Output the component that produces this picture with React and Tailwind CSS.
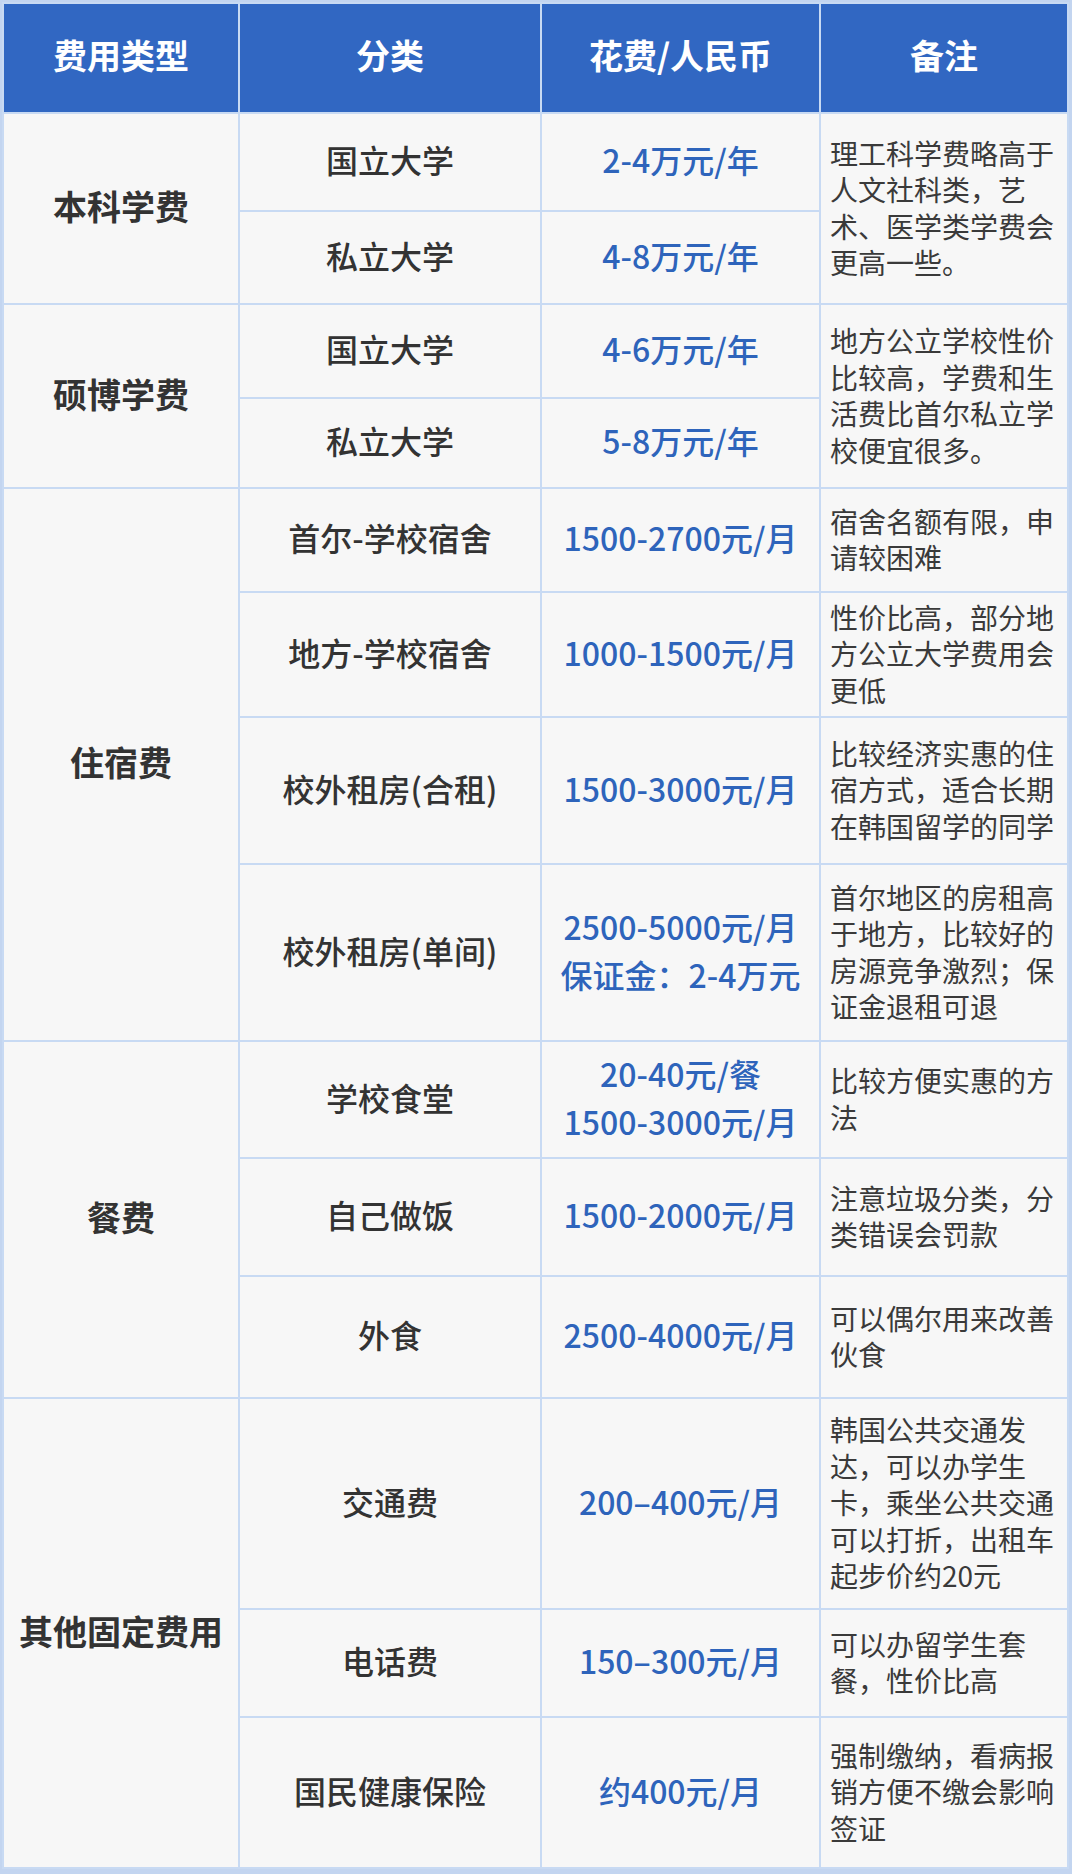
const groups = [
  {
    type: '本科学费',
    note: { text: '理工科学费略高于人文社科类，艺术、医学类学费会更高一些。', span: 2 },
    rows: [
      { h: 'h-[98px]', name: '国立大学', cost: ['2-4万元/年'] },
      { h: 'h-[93px]', name: '私立大学', cost: ['4-8万元/年'] },
    ],
  },
  {
    type: '硕博学费',
    note: { text: '地方公立学校性价比较高，学费和生活费比首尔私立学校便宜很多。', span: 2 },
    rows: [
      { h: 'h-[94px]', name: '国立大学', cost: ['4-6万元/年'] },
      { h: 'h-[90px]', name: '私立大学', cost: ['5-8万元/年'] },
    ],
  },
  {
    type: '住宿费',
    rows: [
      { h: 'h-[104px]', name: '首尔-学校宿舍', cost: ['1500-2700元/月'], note: '宿舍名额有限，申请较困难' },
      { h: 'h-[125px]', name: '地方-学校宿舍', cost: ['1000-1500元/月'], note: '性价比高，部分地方公立大学费用会更低' },
      { h: 'h-[147px]', name: '校外租房(合租)', cost: ['1500-3000元/月'], note: '比较经济实惠的住宿方式，适合长期在韩国留学的同学' },
      { h: 'h-[177px]', name: '校外租房(单间)', cost: ['2500-5000元/月', '保证金：2-4万元'], note: '首尔地区的房租高于地方，比较好的房源竞争激烈；保证金退租可退' },
    ],
  },
  {
    type: '餐费',
    rows: [
      { h: 'h-[117px]', name: '学校食堂', cost: ['20-40元/餐', '1500-3000元/月'], note: '比较方便实惠的方法' },
      { h: 'h-[118px]', name: '自己做饭', cost: ['1500-2000元/月'], note: '注意垃圾分类，分类错误会罚款' },
      { h: 'h-[122px]', name: '外食', cost: ['2500-4000元/月'], note: '可以偶尔用来改善伙食' },
    ],
  },
  {
    type: '其他固定费用',
    rows: [
      { h: 'h-[211px]', name: '交通费', cost: ['200–400元/月'], note: '韩国公共交通发达，可以办学生卡，乘坐公共交通可以打折，出租车起步价约20元' },
      { h: 'h-[108px]', name: '电话费', cost: ['150–300元/月'], note: '可以办留学生套餐，性价比高' },
      { h: 'h-[151px]', name: '国民健康保险', cost: ['约400元/月'], note: '强制缴纳，看病报销方便不缴会影响签证' },
    ],
  },
];

const cell = 'border-2 border-[#c8daf3] bg-[#f7f7f7] px-0 pt-0 align-middle';

function Note({ text, rowSpan }) {
  return (
    <td rowSpan={rowSpan} className={`${cell} pb-[2px] pl-[9px] pr-[8px] text-left text-[28px] leading-[36.5px] text-[#3a3a3a]`}>
      {text}
    </td>
  );
}

export default function App() {
  return (
    <div className="w-[1072px] bg-[#c3d5f0] pl-[2px] pt-[2px] pr-[5px] pb-[7px] font-['Noto_Sans_CJK_SC',sans-serif]">
      <table className="w-[1065px] table-fixed border-collapse">
        <colgroup>
          <col className="w-[236px]" />
          <col className="w-[302px]" />
          <col className="w-[279px]" />
          <col className="w-[248px]" />
        </colgroup>
        <thead>
          <tr className="h-[110px]">
            {['费用类型', '分类', '花费/人民币', '备注'].map((t) => (
              <th key={t} className="border-2 border-[#c8daf3] bg-[#3167c2] px-0 pt-0 pb-[8px] text-center align-middle text-[34px] font-bold text-white">
                {t}
              </th>
            ))}
          </tr>
        </thead>
        <tbody>
          {groups.map((g) =>
            g.rows.map((r, i) => (
              <tr key={g.type + r.name} className={r.h}>
                {i === 0 && (
                  <td rowSpan={g.rows.length} className={`${cell} pb-[6px] text-center text-[34px] font-bold text-[#333]`}>
                    {g.type}
                  </td>
                )}
                <td className={`${cell} pb-[6px] text-center text-[32px] font-medium text-[#333]`}>{r.name}</td>
                <td className={`${cell} pb-[6px] text-center text-[32px] font-medium leading-[48px] text-[#2e64bb]`}>
                  {r.cost.map((c) => (
                    <div key={c}>{c}</div>
                  ))}
                </td>
                {g.note && i === 0 && <Note text={g.note.text} rowSpan={g.note.span} />}
                {r.note && <Note text={r.note} />}
              </tr>
            ))
          )}
        </tbody>
      </table>
    </div>
  );
}
